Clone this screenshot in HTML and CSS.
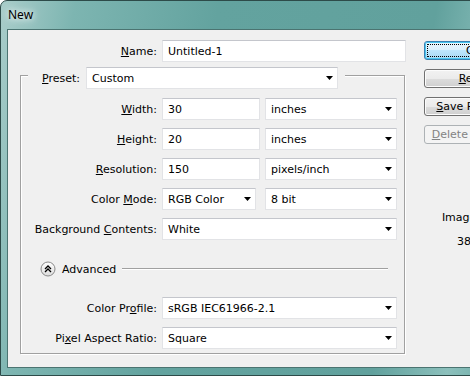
FILE: index.html
```html
<!DOCTYPE html>
<html>
<head>
	<meta charset="utf-8">
	<title>New</title>
	<link rel="stylesheet" href="styles.css">
</head>
<body>
	<div class="window">
		<div class="titlebar">New</div>
		<div class="client">
			<div class="form">
				<div class="row row--name">
					<label class="row__label row__label--wide"><u>N</u>ame:</label>
					<div class="field field--name">Untitled-1</div>
				</div>

				<div class="group">
					<div class="group__head">
						<label class="group__label"><u>P</u>reset:</label>
						<div class="field combo combo--preset">Custom <svg class="arrow" width="7" height="4"><polygon points="0,0 7,0 3.5,4"/></svg></div>
					</div>

					<div class="row row--first">
						<label class="row__label"><u>W</u>idth:</label>
						<div class="field field--num">30</div>
						<div class="field combo combo--unit">inches <svg class="arrow" width="7" height="4"><polygon points="0,0 7,0 3.5,4"/></svg></div>
					</div>
					<div class="row">
						<label class="row__label"><u>H</u>eight:</label>
						<div class="field field--num">20</div>
						<div class="field combo combo--unit">inches <svg class="arrow" width="7" height="4"><polygon points="0,0 7,0 3.5,4"/></svg></div>
					</div>
					<div class="row">
						<label class="row__label"><u>R</u>esolution:</label>
						<div class="field field--num">150</div>
						<div class="field combo combo--unit">pixels/inch <svg class="arrow" width="7" height="4"><polygon points="0,0 7,0 3.5,4"/></svg></div>
					</div>
					<div class="row">
						<label class="row__label">Color <u>M</u>ode:</label>
						<div class="field combo combo--mode">RGB Color <svg class="arrow" width="7" height="4"><polygon points="0,0 7,0 3.5,4"/></svg></div>
						<div class="field combo combo--bits">8 bit <svg class="arrow" width="7" height="4"><polygon points="0,0 7,0 3.5,4"/></svg></div>
					</div>
					<div class="row">
						<label class="row__label">Background <u>C</u>ontents:</label>
						<div class="field combo combo--full">White <svg class="arrow" width="7" height="4"><polygon points="0,0 7,0 3.5,4"/></svg></div>
					</div>

					<div class="advanced">
						<svg class="advanced__icon" width="16" height="16" viewBox="0 0 16 16">
							<defs>
								<linearGradient id="knob" x1="0" y1="0" x2="0" y2="1">
									<stop offset="0" stop-color="#ffffff"/>
									<stop offset="1" stop-color="#dcdcdc"/>
								</linearGradient>
							</defs>
							<circle cx="8" cy="8" r="7" fill="url(#knob)" stroke="#8a8a8a"/>
							<polyline points="5,8 8,5 11,8" fill="none" stroke="#000" stroke-width="1.3"/>
							<polyline points="5,11 8,8 11,11" fill="none" stroke="#000" stroke-width="1.3"/>
						</svg>
						<span class="advanced__text">Advanced</span>
						<div class="advanced__line"></div>
					</div>

					<div class="row row--after">
						<label class="row__label">Color Pr<u>o</u>file:</label>
						<div class="field combo combo--full">sRGB IEC61966-2.1 <svg class="arrow" width="7" height="4"><polygon points="0,0 7,0 3.5,4"/></svg></div>
					</div>
					<div class="row">
						<label class="row__label">Pi<u>x</u>el Aspect Ratio:</label>
						<div class="field combo combo--full">Square <svg class="arrow" width="7" height="4"><polygon points="0,0 7,0 3.5,4"/></svg></div>
					</div>
				</div>
			</div>

			<div class="side">
				<button class="btn btn--default"><span class="btn__focus">OK</span></button>
				<button class="btn"><u>R</u>eset</button>
				<button class="btn"><u>S</u>ave Preset...</button>
				<button class="btn" disabled><u>D</u>elete Preset...</button>

				<div class="size">
					<div class="size__title">Image Size:</div>
					<div class="size__value">38.6M</div>
				</div>
			</div>
		</div>
	</div>
</body>
</html>
```

FILE: styles.css
```css
body {
	margin: 0;
	width: 470px;
	height: 376px;
	overflow: hidden;
	font-family: "DejaVu Sans", sans-serif;
	font-size: 11px;
	color: #000;
	background: #fff;
}

u {
	text-decoration: underline;
	text-underline-offset: 1px;
}

.window {
	box-sizing: border-box;
	width: 560px;
	height: 376px;
	display: flex;
	flex-direction: column;
	padding: 0 6px 7px;
	border: 1px solid #2d4b49;
	border-radius: 7px 7px 0 0;
	background: linear-gradient(100deg, #a9cdca 0, #7db5b1 12%, #63a39f 35%, #61a19d 70%, #8cc0bc 82%, #66a7a2 92%, #64a5a0 100%);
}

.titlebar {
	height: 28px;
	line-height: 28px;
	padding-left: 1px;
	font-family: "Noto Sans", sans-serif;
	font-size: 12px;
	text-shadow: 0 0 6px #fff, 0 0 10px #e8f3f2;
}

.client {
	flex: 1;
	display: flex;
	border: 1px solid #4b7471;
	background: #f0f0f0;
}

.form {
	width: 398px;
	flex: none;
	padding-top: 10px;
}

.row {
	display: flex;
	align-items: center;
	height: 22px;
	margin-top: 8px;
}

.row--name {
	margin-top: 0;
}

.row--first {
	margin-top: 9px;
}

.row--after {
	margin-top: 17px;
}

.row__label {
	flex: none;
	width: 136px;
	margin-right: 5px;
	text-align: right;
	white-space: nowrap;
}

.row__label--wide {
	width: 149px;
}

.field {
	box-sizing: border-box;
	height: 22px;
	display: flex;
	align-items: center;
	padding: 0 4px 0 5px;
	background: #fff;
	border: 1px solid #e2e3e6;
	border-top-color: #c4c6cc;
	white-space: nowrap;
}

.field--name {
	width: 244px;
}

.field--num {
	width: 98px;
	margin-right: 5px;
}

.combo {
	justify-content: space-between;
}

.arrow {
	flex: none;
	fill: #000;
}

.combo--preset {
	width: 252px;
}

.combo--unit,
.combo--bits {
	width: 132px;
}

.combo--mode {
	width: 94px;
	margin-right: 9px;
}

.combo--full {
	width: 235px;
}

.group {
	box-sizing: border-box;
	width: 385px;
	margin: 13px 0 0 12px;
	padding-bottom: 4px;
	border: 1px solid #a0a0a0;
	box-shadow: 1px 1px 0 #fff, inset 1px 1px 0 #fff;
}

.group__head {
	display: flex;
	align-items: center;
	width: fit-content;
	margin: -9px 0 0 7px;
	padding: 0 7px 0 14px;
	background: #f0f0f0;
}

.group__label {
	width: 44px;
}

.advanced {
	display: flex;
	align-items: center;
	height: 22px;
	margin: 18px 16px 0 19px;
}

.advanced__icon {
	flex: none;
	margin-right: 6px;
}

.advanced__text {
	margin-right: 6px;
}

.advanced__line {
	flex: 1;
	height: 0;
	border-top: 1px solid #a0a0a0;
	border-bottom: 1px solid #fff;
}

.side {
	width: 100px;
	flex: none;
	margin-left: 18px;
	padding-top: 11px;
	display: flex;
	flex-direction: column;
}

.btn {
	box-sizing: border-box;
	height: 19px;
	margin-bottom: 9px;
	padding: 0;
	font: inherit;
	color: #000;
	text-align: center;
	border: 1px solid #707070;
	border-radius: 3px;
	background: linear-gradient(#f2f2f2 0, #ebebeb 50%, #dddddd 50%, #cfcfcf 100%);
	box-shadow: inset 0 0 0 1px #fcfcfc;
}

.btn--default {
	border-color: #3c7fb1;
	box-shadow: inset 0 0 0 1px #48c6f0;
	background: linear-gradient(#eaf6fd 0, #d9f0fc 50%, #bee6fd 50%, #a7d9f5 100%);
	padding: 2px;
}

.btn__focus {
	display: block;
	height: 100%;
	box-sizing: border-box;
	line-height: 11px;
	border: 1px dotted #000;
}

.btn:disabled {
	color: #838383;
	border-color: #adb2b5;
	background: #f4f4f4;
	box-shadow: none;
}

.size {
	margin-top: 58px;
	text-align: center;
}

.size__value {
	margin-top: 11px;
}
```
